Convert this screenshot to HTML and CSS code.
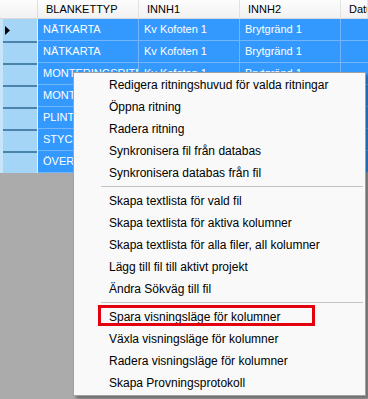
FILE: index.html
```html
<!DOCTYPE html>
<html lang="sv">
<head>
    <meta charset="UTF-8">
    <meta name="viewport" content="width=device-width, initial-scale=1.0">
    <title>Ritningar</title>
    <link rel="stylesheet" href="styles.css">
</head>
<body>
    <div class="grid">
        <div class="row head">
            <div class="rh"></div>
            <div class="cell">BLANKETTYP</div>
            <div class="cell">INNH1</div>
            <div class="cell">INNH2</div>
            <div class="cell last">Datum</div>
        </div>
        <div class="row">
            <div class="rh first">
                <svg class="arrow" width="6" height="9" viewBox="0 0 6 9"><path d="M0 0 L5 4.5 L0 9 Z" fill="#000"/></svg>
            </div>
            <div class="cell">NÄTKARTA</div>
            <div class="cell">Kv Kofoten 1</div>
            <div class="cell">Brytgränd 1</div>
            <div class="cell last"></div>
        </div>
        <div class="row">
            <div class="rh"></div>
            <div class="cell">NÄTKARTA</div>
            <div class="cell">Kv Kofoten 1</div>
            <div class="cell">Brytgränd 1</div>
            <div class="cell last"></div>
        </div>
        <div class="row">
            <div class="rh"></div>
            <div class="cell">MONTERINGSRITNING</div>
            <div class="cell">Kv Kofoten 1</div>
            <div class="cell">Brytgränd 1</div>
            <div class="cell last"></div>
        </div>
        <div class="row">
            <div class="rh"></div>
            <div class="cell">MONTERINGSRITNING</div>
            <div class="cell">Kv Kofoten 1</div>
            <div class="cell">Brytgränd 1</div>
            <div class="cell last"></div>
        </div>
        <div class="row">
            <div class="rh"></div>
            <div class="cell">PLINTRITNING</div>
            <div class="cell">Kv Kofoten 1</div>
            <div class="cell">Brytgränd 1</div>
            <div class="cell last"></div>
        </div>
        <div class="row">
            <div class="rh"></div>
            <div class="cell">STYCKLISTA</div>
            <div class="cell">Kv Kofoten 1</div>
            <div class="cell">Brytgränd 1</div>
            <div class="cell last"></div>
        </div>
        <div class="row">
            <div class="rh"></div>
            <div class="cell">ÖVERSIKTSKARTA</div>
            <div class="cell">Kv Kofoten 1</div>
            <div class="cell">Brytgränd 1</div>
            <div class="cell last"></div>
        </div>
    </div>

    <!-- Context menu -->
    <div class="menu">
        <div class="item">Redigera ritningshuvud för valda ritningar</div>
        <div class="item">Öppna ritning</div>
        <div class="item">Radera ritning</div>
        <div class="item">Synkronisera fil från databas</div>
        <div class="item">Synkronisera databas från fil</div>
        <div class="sep"></div>
        <div class="item">Skapa textlista för vald fil</div>
        <div class="item">Skapa textlista för aktiva kolumner</div>
        <div class="item">Skapa textlista för alla filer, all kolumner</div>
        <div class="item">Lägg till fil till aktivt projekt</div>
        <div class="item">Ändra Sökväg till fil</div>
        <div class="sep"></div>
        <div class="item marked">Spara visningsläge för kolumner</div>
        <div class="item">Växla visningsläge för kolumner</div>
        <div class="item">Radera visningsläge för kolumner</div>
        <div class="item">Skapa Provningsprotokoll</div>
    </div>
</body>
</html>
```

FILE: styles.css
```css
body {
    margin: 0;
    width: 368px;
    height: 399px;
    overflow: hidden;
    position: relative;
    background: #ababab;
    font-family: "Liberation Sans", Arial, sans-serif;
}

.grid {
    width: 368px;
    overflow: hidden;
}

.row {
    display: flex;
    height: 22px;
}

.rh {
    flex: none;
    width: 38px;
    box-sizing: border-box;
    background: #a5d5f6;
    border-right: 1px solid #e4f1fb;
    box-shadow: inset 3px 0 #c6e5fa, inset 0 2px #4b84ab;
    display: flex;
    align-items: center;
}

.rh.first {
    box-shadow: inset 3px 0 #c6e5fa;
}

.arrow {
    margin-left: 5px;
}

.cell {
    flex: none;
    width: 101px;
    box-sizing: border-box;
    padding-left: 5px;
    background: #3399ff;
    color: #fff;
    font-size: 11px;
    line-height: 21px;
    border-right: 1px solid #72b5f8;
    border-bottom: 1px solid #72b5f8;
    white-space: nowrap;
    overflow: hidden;
}

.cell.last {
    flex: 1;
    border-right: none;
}

.row.head {
    height: 19px;
    background: linear-gradient(#fdfdfd, #f1f1f1);
}

.head .rh {
    background: transparent;
    box-shadow: none;
    border-right: 1px solid #dedede;
    border-bottom: 1px solid #d8d8d8;
}

.head .cell {
    background: transparent;
    color: #000;
    padding-left: 8px;
    line-height: 18px;
    border-right: 1px solid #e2e2e2;
    border-bottom: 1px solid #d8d8d8;
}

.menu {
    position: absolute;
    left: 73px;
    top: 72px;
    width: 293px;
    box-sizing: border-box;
    padding: 1px 0;
    background: #f9f9f9;
    border: 1px solid #a0a0a0;
    box-shadow: 3px 3px 3px rgba(0, 0, 0, 0.35);
    font-size: 12px;
    color: #000;
}

.item {
    position: relative;
    height: 22px;
    line-height: 22px;
    padding-left: 35px;
    white-space: nowrap;
}

.item.marked::after {
    content: "";
    position: absolute;
    left: 24px;
    top: -1px;
    width: 217px;
    height: 21px;
    box-sizing: border-box;
    border: 3px solid #e3000f;
}

.sep {
    position: relative;
    height: 6px;
}

.sep::before {
    content: "";
    position: absolute;
    left: 27px;
    right: 2px;
    top: 2px;
    border-top: 1px solid #c4c4c4;
}
```
